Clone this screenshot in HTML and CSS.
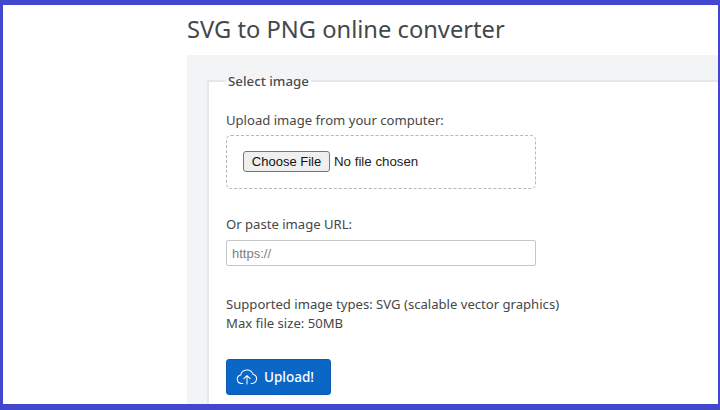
FILE: index.html
```html
<!DOCTYPE html>
<html lang="en">
<head>
<meta charset="utf-8">
<title>SVG to PNG online converter</title>
<link rel="stylesheet" href="styles.css">
</head>
<body>
<div class="frame">
  <main class="content">
    <h1 class="title">SVG to PNG online converter</h1>
    <section class="panel">
      <fieldset class="group">
        <legend class="legend">Select image</legend>
        <label class="label">Upload image from your computer:</label>
        <div class="dropzone">
          <input class="file" type="file">
        </div>
        <label class="label label-url">Or paste image URL:</label>
        <input class="url" type="text" placeholder="https://">
        <p class="info">Supported image types: SVG (scalable vector graphics)<br>Max file size: 50MB</p>
        <button class="upload" type="button">
          <svg class="cloud" viewBox="0 0 24 24" width="22" height="22" fill="none" stroke="currentColor" stroke-width="1.1" stroke-linecap="round" stroke-linejoin="round">
            <path d="M7.5 19H6a4.6 4.6 0 0 1-.9-9.1A7 7 0 0 1 18.6 9a5.1 5.1 0 0 1-.6 10h-1.500"/>
            <path d="M12 19.500v-9M8.600 13.800 12 10.400l3.400 3.400"/>
          </svg>
          <span>Upload!</span>
        </button>
      </fieldset>
    </section>
  </main>
</div>
</body>
</html>
```

FILE: styles.css
```css
* { box-sizing: border-box; }
html, body { margin: 0; padding: 0; background: #fff; }
body { width: 720px; height: 410px; overflow: hidden; font-family: "Noto Sans", "Open Sans", sans-serif; color: #3f4144; }
.frame {
  width: 720px;
  height: 410px;
  border-style: solid;
  border-color: #4347cd;
  border-width: 5px 2px 6px 3px;
  overflow: hidden;
  background: #fff;
}
.content { margin-left: 184px; height: 100%; }
.title {
  margin: 0;
  height: 50px;
  padding-top: 8px;
  font-size: 23.7px;
  line-height: 33px;
  font-weight: 400;
  color: #45484b;
}
.panel {
  background: #f3f4f6;
  padding: 17px 0 0 20px;
  height: 360px;
}
.group {
  margin: 0;
  min-width: 0;
  background: #fff;
  border: 0;
  border-top: 2px solid #e6e7e9;
  border-left: 2px solid #e6e7e9;
  padding: 21px 0 0 17px;
  height: 340px;
}
.legend {
  margin-left: 0;
  padding: 0 2px;
  font-size: 13.3px;
  line-height: 18px;
  font-weight: 500;
  color: #4a4c4f;
}
.label {
  display: block;
  font-size: 13.1px;
  line-height: 18px;
  color: #45474a;
}
.dropzone {
  margin-top: 6px;
  width: 310px;
  height: 54px;
  border: 1px dashed #b4b6b8;
  border-radius: 5px;
  padding: 15px 0 0 16px;
}
.file {
  display: block;
  font-family: "Liberation Sans", Arial, sans-serif;
  font-size: 13.3px;
  color: #222;
}
.file::file-selector-button {
  font-family: "Liberation Sans", Arial, sans-serif;
  font-size: 13px;
  height: 21px;
  width: 87px;
  padding: 0;
  margin-right: 4px;
  background: #efefef;
  border: 1px solid #767676;
  border-radius: 3px;
  color: #111;
}
.label-url { margin-top: 26px; }
.url {
  display: block;
  margin-top: 7px;
  width: 310px;
  height: 26px;
  border: 1px solid #c6c7c9;
  border-radius: 2px;
  padding: 0 5px;
  font-family: "Liberation Sans", Arial, sans-serif;
  font-size: 13px;
  background: #fff;
}
.url::placeholder { color: #7d7f81; opacity: 1; }
.info {
  margin: 29px 0 0;
  font-size: 13.1px;
  line-height: 19px;
  color: #45474a;
}
.upload {
  display: flex;
  align-items: center;
  gap: 6px;
  margin-top: 26px;
  width: 105px;
  height: 36px;
  padding: 0 0 0 9px;
  border: 1px solid #0a5cb0;
  border-radius: 3px;
  background: #0a67c8;
  color: #fff;
  font-family: inherit;
  font-size: 13.500px;
  font-weight: 500;
}
.cloud { flex: none; }
```
